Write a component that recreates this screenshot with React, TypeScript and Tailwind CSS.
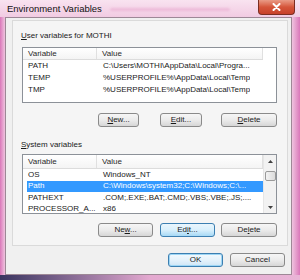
import React from "react";

type Row = { name: string; value: string; selected?: boolean };

const USER_VARS: Row[] = [
  { name: "PATH", value: "C:\\Users\\MOTHI\\AppData\\Local\\Progra..." },
  { name: "TEMP", value: "%USERPROFILE%\\AppData\\Local\\Temp" },
  { name: "TMP", value: "%USERPROFILE%\\AppData\\Local\\Temp" },
];

const SYSTEM_VARS: Row[] = [
  { name: "OS", value: "Windows_NT" },
  { name: "Path", value: "C:\\Windows\\system32;C:\\Windows;C:\\...", selected: true },
  { name: "PATHEXT", value: ".COM;.EXE;.BAT;.CMD;.VBS;.VBE;.JS;...." },
  { name: "PROCESSOR_A...", value: "x86" },
];

function Btn({
  children,
  w,
  ml,
  variant = "normal",
}: {
  children: React.ReactNode;
  w: string;
  ml: string;
  variant?: "normal" | "hot" | "default";
}) {
  const look =
    variant === "hot"
      ? "border-[#3c7fb1] bg-gradient-to-b from-[#eaf6fd] via-[#d9f0fc] to-[#a7d9f5]"
      : variant === "default"
      ? "border-[#3c7fb1] bg-gradient-to-b from-[#f4fafe] via-[#e5f2fb] to-[#cfe6f6] shadow-[inset_0_0_0_1px_#9ed6f5]"
      : "border-[#8a8a8a] bg-gradient-to-b from-[#f6f6f6] via-[#ebebeb] to-[#d6d6d6]";
  return (
    <div
      className={`${w} ${ml} h-[14px] shrink-0 rounded-[3px] border ${look} flex items-center justify-center text-[8px] leading-none text-[#1a1a1a]`}
    >
      {children}
    </div>
  );
}

function ListRow({ row, h }: { row: Row; h: string }) {
  return (
    <div
      className={`flex items-center ${h} ml-[4px] w-[236px] ${
        row.selected ? "bg-[#3399ff] text-white" : "text-[#1a1a1a]"
      }`}
    >
      <div className="w-[71px] pl-[1px] whitespace-nowrap overflow-hidden">{row.name}</div>
      <div className="pl-[5px] whitespace-nowrap overflow-hidden">{row.value}</div>
    </div>
  );
}

function Header({ h }: { h: string }) {
  return (
    <div className={`flex ${h} w-[240px] border-b border-[#dcdcdc] bg-gradient-to-b from-white to-[#f4f4f4] text-[#2a2a2a]`}>
      <div className="w-[74px] pl-[5px] flex items-center border-r border-[#e0e0e0]">Variable</div>
      <div className="flex-1 pl-[5px] flex items-center border-r border-[#e0e0e0]">Value</div>
    </div>
  );
}

export default function App() {
  return (
    <div className="w-[300px] h-[280px] flex flex-col overflow-hidden bg-[#edbbd9] font-['Liberation_Sans',Arial,sans-serif] text-[8px] leading-none">
      {/* Title bar */}
      <div className="relative h-[17px] shrink-0 bg-gradient-to-b from-[#f9e3f0] to-[#f1cbe2] flex items-center pl-[7px]">
        <span className="text-[9.5px] text-[#111]">Environment Variables</span>
        <div className="absolute left-[110px] top-[8px] h-[3px] w-[120px] rounded-full bg-[#e8a9cf] opacity-60 blur-[1px]" />
        <div className="absolute right-[5px] top-0 w-[37px] h-[15px] rounded-b-[4px] border border-t-0 border-[#7b2d22] bg-gradient-to-b from-[#e99a86] via-[#d5553a] to-[#c7402a] flex items-center justify-center">
          <svg width="9" height="8" viewBox="0 0 9 8">
            <path d="M1.5 1 L7.5 7 M7.5 1 L1.5 7" stroke="white" strokeWidth="2" strokeLinecap="round" />
          </svg>
        </div>
      </div>

      <div className="flex flex-1">
        {/* left frame */}
        <div className="w-[5px] bg-gradient-to-r from-[#d977b9] to-[#efc3df]" />

        {/* client */}
        <div className="w-[287px] border border-[#9d8896] bg-[#f0f0f0] flex flex-col">
          {/* panel */}
          <div className="ml-[6px] mt-[2px] w-[276px] border border-[#dadada] bg-[#f5f5f5] flex flex-col pb-[8px]">
            <div className="pl-[8px] mt-[10px] h-[10px] flex items-center text-[#1a1a1a]">
              <span>
                <span className="underline">U</span>ser variables for MOTHI
              </span>
            </div>

            {/* user list */}
            <div className="ml-[9px] mt-[6px] w-[255px] h-[56px] border border-[#8c9198] bg-white overflow-hidden">
              <Header h="h-[12px]" />
              {USER_VARS.map((r) => (
                <ListRow key={r.name} row={r} h="h-[12px]" />
              ))}
            </div>

            <div className="flex mt-[10px]">
              <Btn w="w-[41px]" ml="ml-[85px]">
                <span>
                  <span className="underline">N</span>ew...
                </span>
              </Btn>
              <Btn w="w-[42px]" ml="ml-[21px]">
                <span>
                  <span className="underline">E</span>dit...
                </span>
              </Btn>
              <Btn w="w-[56px]" ml="ml-[19px]">
                <span>
                  <span className="underline">D</span>elete
                </span>
              </Btn>
            </div>

            <div className="pl-[8px] mt-[13px] h-[10px] flex items-center text-[#1a1a1a]">
              <span>
                <span className="underline">S</span>ystem variables
              </span>
            </div>

            {/* system list */}
            <div className="ml-[9px] mt-[4px] w-[255px] h-[60px] border border-[#8c9198] bg-white overflow-hidden flex">
              <div className="w-[240px] flex flex-col">
                <Header h="h-[14px] shrink-0" />
                {SYSTEM_VARS.map((r) => (
                  <ListRow key={r.name} row={r} h="h-[11.5px] shrink-0" />
                ))}
              </div>
              {/* scrollbar */}
              <div className="w-[13px] bg-[#f2f2f2] border-l border-[#e6e6e6] flex flex-col items-center">
                <div className="h-[12px] flex items-center justify-center">
                  <svg width="5" height="3" viewBox="0 0 5 3">
                    <path d="M0 3 L2.5 0 L5 3 Z" fill="#404040" />
                  </svg>
                </div>
                <div className="mt-[4px] h-[10px] w-[11px] rounded-[2px] border border-[#9a9a9a] bg-gradient-to-r from-[#f3f3f3] to-[#dcdcdc]" />
                <div className="flex-1" />
                <div className="h-[12px] flex items-center justify-center">
                  <svg width="5" height="3" viewBox="0 0 5 3">
                    <path d="M0 0 L2.5 3 L5 0 Z" fill="#404040" />
                  </svg>
                </div>
              </div>
            </div>

            <div className="flex mt-[9px]">
              <Btn w="w-[55px]" ml="ml-[85px]">
                <span>
                  Ne<span className="underline">w</span>...
                </span>
              </Btn>
              <Btn w="w-[55px]" ml="ml-[7px]" variant="hot">
                <span>
                  Ed<span className="underline">i</span>t...
                </span>
              </Btn>
              <Btn w="w-[56px]" ml="ml-[6px]">
                <span>
                  De<span className="underline">l</span>ete
                </span>
              </Btn>
            </div>
          </div>

          <div className="flex mt-[7px]">
            <Btn w="w-[55px]" ml="ml-[162px]" variant="default">
              OK
            </Btn>
            <Btn w="w-[55px]" ml="ml-[7px]">
              Cancel
            </Btn>
          </div>
        </div>

        {/* right frame */}
        <div className="flex-1 bg-gradient-to-r from-[#efc3df] to-[#d977b9]" />
      </div>

      {/* bottom frame */}
      <div className="h-[5px] shrink-0 bg-gradient-to-r from-[#3b3560] via-[#e4a9d0] to-[#e9b4d6]" />
    </div>
  );
}
